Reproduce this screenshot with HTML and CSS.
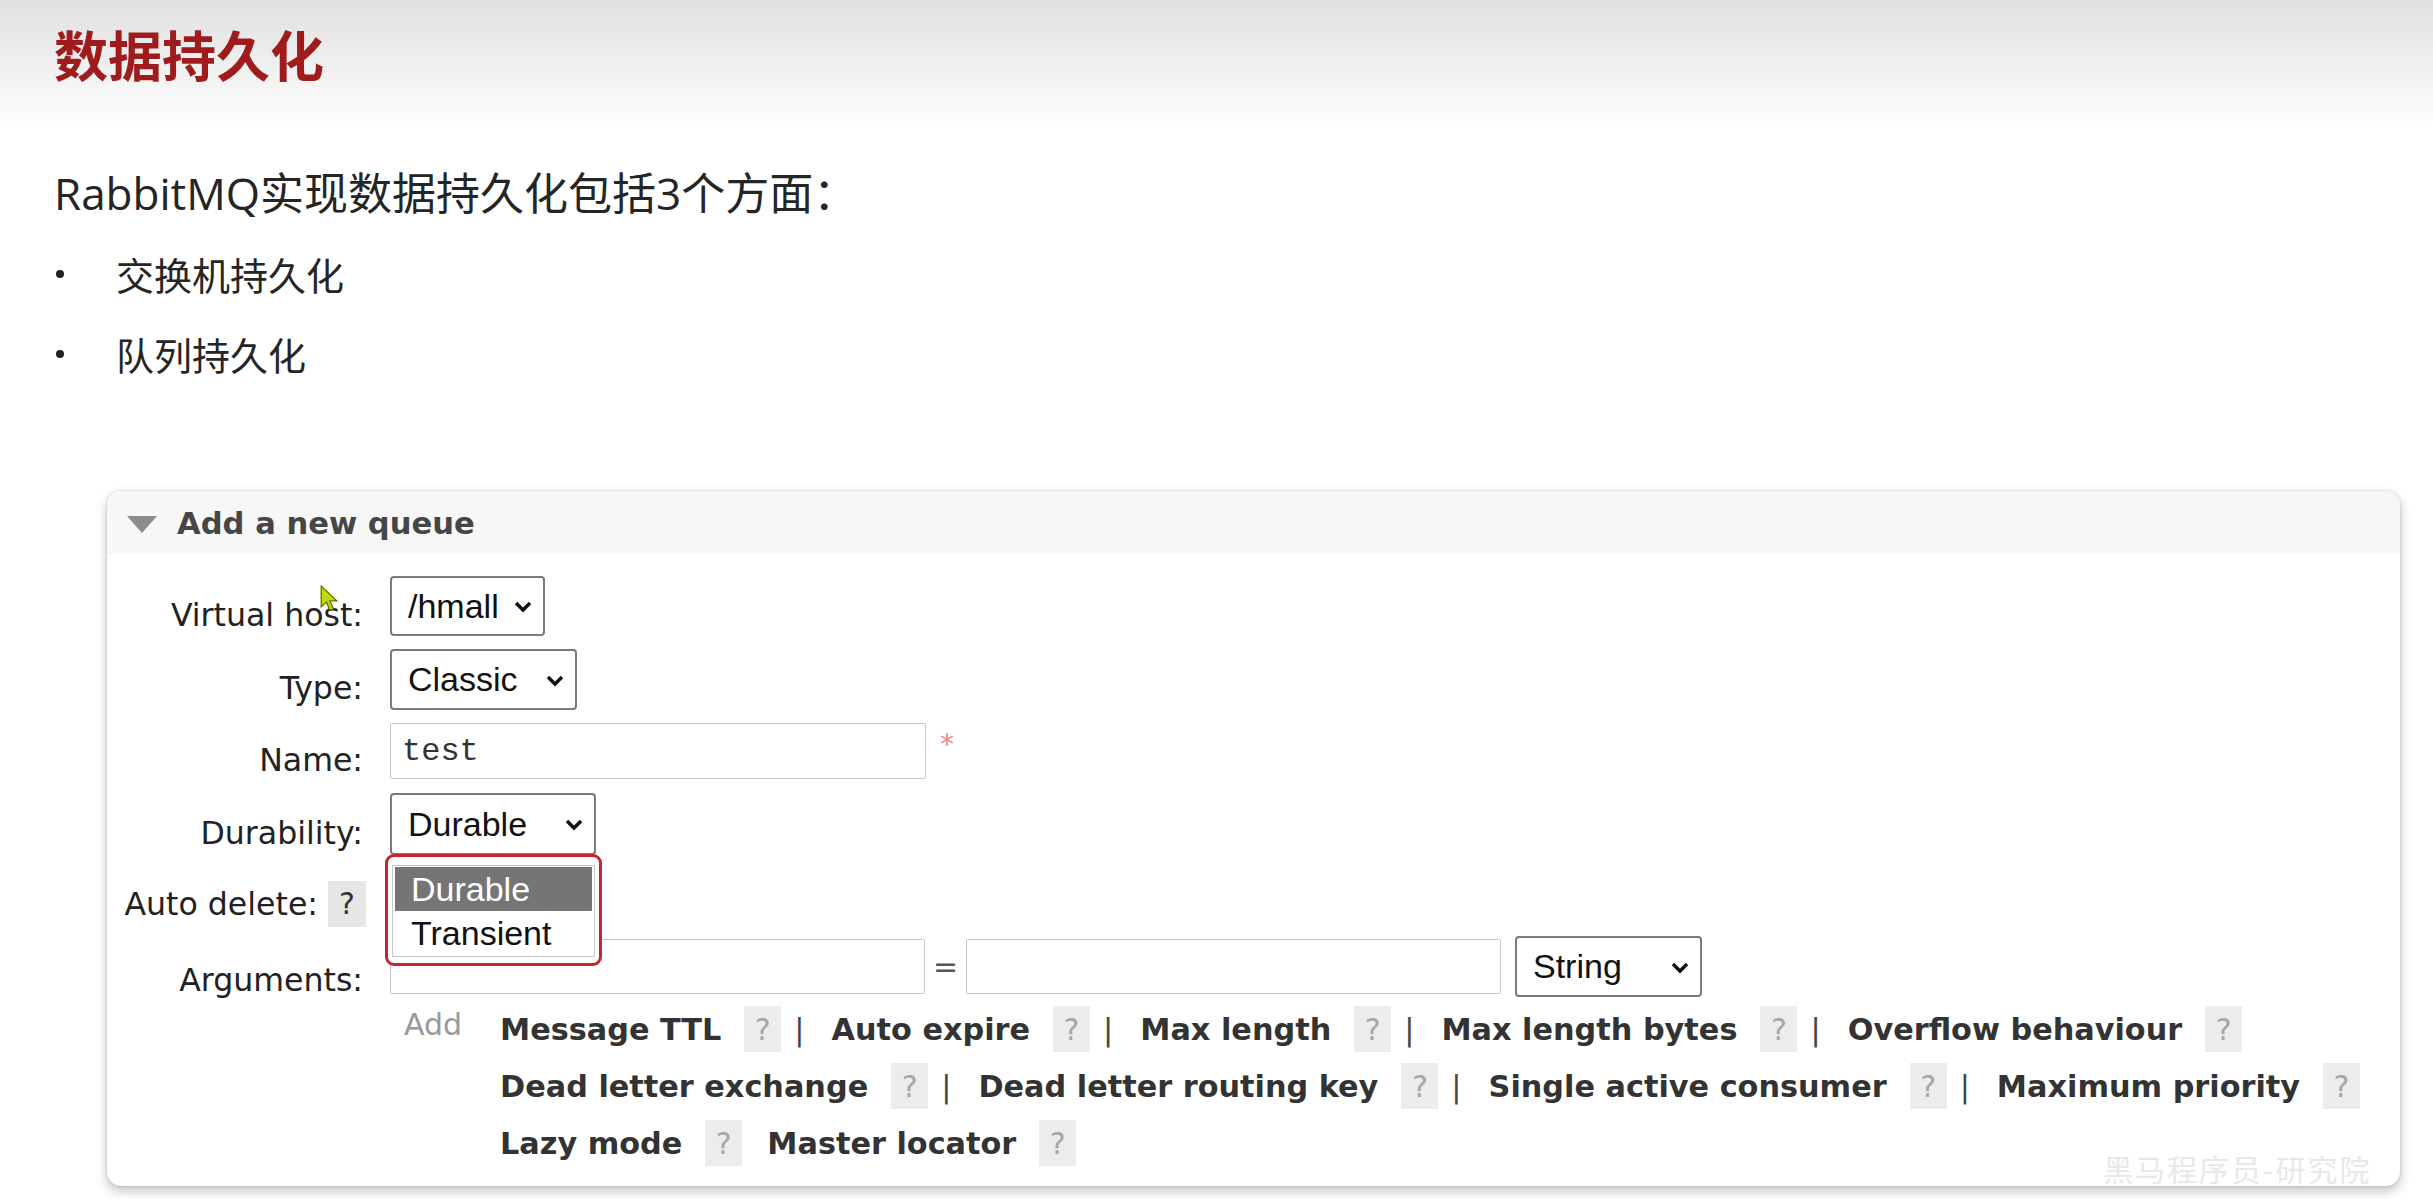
FILE: index.html
```html
<!DOCTYPE html>
<html lang="zh">
<head>
<meta charset="utf-8">
<title>数据持久化</title>
<link rel="stylesheet" href="styles.css">
</head>
<body>
<header class="top"><h1>数据持久化</h1></header>
<main class="content">
  <p class="lead">RabbitMQ实现数据持久化包括3个方面：</p>
  <ul class="bullets">
    <li>交换机持久化</li>
    <li>队列持久化</li>
  </ul>

  <section class="card">
    <div class="card-head">
      <svg class="tri" viewBox="0 0 30 17"><polygon points="0,0 30,0 15,17" fill="#8c8c8c"/></svg>
      <h2>Add a new queue</h2>
    </div>
    <div class="card-body">
      <div class="row r-vh">
        <div class="lbl">Virtual host:</div>
        <div class="sel w-vh"><span>/hmall</span><svg viewBox="0 0 18 12"><polyline points="2,2 9,9 16,2" fill="none" stroke="#111" stroke-width="3.4"/></svg></div>
      </div>
      <div class="row r-type">
        <div class="lbl">Type:</div>
        <div class="sel w-type"><span>Classic</span><svg viewBox="0 0 18 12"><polyline points="2,2 9,9 16,2" fill="none" stroke="#111" stroke-width="3.4"/></svg></div>
      </div>
      <div class="row r-name">
        <div class="lbl">Name:</div>
        <div class="inp w-name"><span class="mono">test</span></div>
        <span class="req">*</span>
      </div>
      <div class="row r-dur">
        <div class="lbl">Durability:</div>
        <div class="sel w-dur"><span>Durable</span><svg viewBox="0 0 18 12"><polyline points="2,2 9,9 16,2" fill="none" stroke="#111" stroke-width="3.4"/></svg>
          <div class="popup">
            <div class="list">
              <div class="opt on">Durable</div>
              <div class="opt">Transient</div>
            </div>
          </div>
        </div>
      </div>
      <div class="row r-auto">
        <div class="lbl lbl-auto">Auto delete: <span class="qd">?</span></div>
      </div>
      <div class="row r-args">
        <div class="lbl lbl-args">Arguments:</div>
        <div class="inp w-key"></div>
        <span class="eq">=</span>
        <div class="inp w-val"></div>
        <div class="sel w-str"><span>String</span><svg viewBox="0 0 18 12"><polyline points="2,2 9,9 16,2" fill="none" stroke="#111" stroke-width="3.4"/></svg></div>
      </div>
      <div class="row r-add">
        <div class="lbl-space"></div>
        <span class="addlbl">Add</span>
        <div class="links">
          <div class="ln">
            <span>Message TTL</span><span class="q">?</span><span class="sep">|</span>
            <span>Auto expire</span><span class="q">?</span><span class="sep">|</span>
            <span>Max length</span><span class="q">?</span><span class="sep">|</span>
            <span>Max length bytes</span><span class="q">?</span><span class="sep">|</span>
            <span>Overflow behaviour</span><span class="q">?</span>
          </div>
          <div class="ln">
            <span>Dead letter exchange</span><span class="q">?</span><span class="sep">|</span>
            <span>Dead letter routing key</span><span class="q">?</span><span class="sep">|</span>
            <span>Single active consumer</span><span class="q">?</span><span class="sep">|</span>
            <span>Maximum priority</span><span class="q">?</span>
          </div>
          <div class="ln">
            <span>Lazy mode</span><span class="q">?</span>
            <span class="next">Master locator</span><span class="q">?</span>
          </div>
        </div>
      </div>
    </div>
    <svg class="cursor" viewBox="0 0 18 26"><polygon points="1,1 1,21 6,16.5 9.5,24.5 12.8,23 9.3,15.2 16,15.2" fill="#bfdc00" stroke="#5f7000" stroke-width="1.2"/></svg>
    <div class="wm">黑马程序员-研究院</div>
  </section>
</main>
</body>
</html>
```
FILE: styles.css
```css
* { box-sizing: border-box; margin: 0; padding: 0; }
html, body { background: #fff; }
body {
  width: 2433px;
  height: 1199px;
  overflow: hidden;
  font-family: "Noto Sans CJK SC", sans-serif;
  color: #222;
}

/* slide header */
.top {
  height: 130px;
  padding: 27px 0 0 54px;
  background: linear-gradient(#e0e0e0, #ffffff);
}
.top h1 {
  font-family: "Noto Sans CJK SC", sans-serif;
  font-size: 54px;
  line-height: 54px;
  font-weight: 700;
  color: #a01c1c;
}

.content { padding-left: 54px; }

.lead {
  margin-top: 37px;
  font-family: "Open Sans", "Noto Sans CJK SC", sans-serif;
  font-size: 44px;
  line-height: 52px;
  color: #252525;
}
.bullets { list-style: none; margin-top: 14px; }
.bullets li {
  display: flex;
  align-items: center;
  height: 80px;
  font-size: 38px;
  color: #252525;
}
.bullets li::before {
  content: "";
  width: 8px;
  height: 8px;
  border-radius: 50%;
  background: #222;
  margin: 2px 52px 0 2px;
  flex: none;
}

/* management UI card */
.card {
  position: relative;
  margin: 98px 0 0 53px;
  width: 2293px;
  height: 695px;
  border-radius: 14px;
  background: #fff;
  box-shadow: 0 5px 12px rgba(0,0,0,0.24), 0 0 3px rgba(0,0,0,0.18);
  font-family: "DejaVu Sans", Verdana, sans-serif;
  color: #222;
}
.card-head {
  height: 63px;
  background: #f7f7f7;
  border-radius: 14px 14px 0 0;
  display: flex;
  align-items: center;
  padding-left: 20px;
}
.tri { width: 30px; height: 17px; margin: 4px 20px 0 0; }
.card-head h2 {
  font-size: 30.6px;
  font-weight: 700;
  color: #464646;
  line-height: 36px;
  margin-top: 3px;
}
.card-body { padding-top: 22px; }

.row { display: flex; align-items: center; }
.r-vh { height: 60px; margin-bottom: 13px; }
.r-type { height: 61px; margin-bottom: 13px; }
.r-name { height: 56px; margin-bottom: 14px; }
.r-dur { height: 62px; margin-bottom: 26px; }
.r-auto { height: 46px; margin-bottom: 12px; }
.r-args { height: 55px; margin-bottom: 12px; }
.r-add { align-items: flex-start; }

.lbl {
  flex: none;
  width: 256px;
  margin-right: 27px;
  text-align: right;
  font-size: 31.6px;
  line-height: 36px;
  padding-top: 17px;
  color: #222;
}
.lbl-args { padding-top: 26px; }
.lbl-auto {
  padding-top: 0;
  width: 259px;
  margin-right: 24px;
  display: flex;
  align-items: center;
  justify-content: flex-end;
}
.qd {
  display: inline-flex;
  align-items: center;
  justify-content: center;
  width: 38px;
  height: 46px;
  margin-left: 10px;
  background: #e6e6e6;
  color: #333;
  font-size: 30px;
}
.lbl-space { flex: none; width: 283px; }

/* select boxes */
.sel {
  position: relative;
  flex: none;
  display: flex;
  align-items: center;
  justify-content: space-between;
  border: 2px solid #7a7a7a;
  border-radius: 4px;
  padding: 0 11px 0 16px;
  background: #fff;
  font-family: "Liberation Sans", Arial, sans-serif;
  font-size: 34px;
  color: #111;
}
.sel svg { width: 18px; height: 12px; flex: none; margin-top: 2px; }
.w-vh { width: 155px; height: 60px; }
.w-type { width: 187px; height: 61px; }
.w-dur { width: 206px; height: 62px; }
.w-str { width: 187px; height: 61px; margin-left: 14px; }

/* text inputs */
.inp {
  flex: none;
  height: 56px;
  border: 1px solid #c6c6c6;
  border-radius: 2px;
  background: #fff;
  display: flex;
  align-items: center;
  padding-left: 11px;
}
.w-name { width: 536px; }
.w-key { width: 535px; height: 55px; }
.w-val { width: 535px; height: 55px; }
.mono {
  font-family: "Liberation Mono", "Courier New", monospace;
  font-size: 32px;
  color: #333;
}
.req {
  margin: -14px 0 0 14px;
  font-size: 28px;
  color: #e98a8a;
}
.eq {
  width: 41px;
  text-align: center;
  font-size: 30px;
  color: #555;
}

/* dropdown list popup */
.popup {
  position: absolute;
  left: -7px;
  top: 59px;
  width: 217px;
  height: 112px;
  border: 3px solid #c3262c;
  border-radius: 9px;
  padding: 8px 4px 0 4px;
  background: #fff;
  z-index: 5;
}
.list {
  border: 1px solid #c8c8c8;
  padding: 1px 2px;
  background: #fff;
}
.opt {
  height: 44px;
  line-height: 44px;
  padding-left: 16px;
  font-family: "Liberation Sans", Arial, sans-serif;
  font-size: 34px;
  color: #111;
}
.opt.on { background: #757575; color: #fff; }

/* argument shortcut links */
.addlbl {
  flex: none;
  width: 96px;
  margin-left: 14px;
  margin-top: 1px;
  font-size: 30px;
  line-height: 36px;
  color: #999;
}
.links { display: flex; flex-direction: column; gap: 11px; }
.ln {
  display: flex;
  align-items: center;
  height: 46px;
  font-size: 30.3px;
  font-weight: 700;
  color: #333;
  white-space: nowrap;
}
.q {
  display: inline-flex;
  align-items: center;
  justify-content: center;
  width: 37px;
  height: 46px;
  margin-left: 23px;
  background: #ececec;
  color: #a6a6a6;
  font-weight: 400;
  font-size: 30px;
}
.sep {
  margin: 0 27px 0 13px;
  font-weight: 400;
  color: #444;
}
.next { margin-left: 25px; }

/* overlays */
.cursor {
  position: absolute;
  left: 213px;
  top: 94px;
  width: 19px;
  height: 27px;
}
.wm {
  position: absolute;
  left: 1996px;
  top: 660px;
  font-family: "Noto Sans CJK SC", sans-serif;
  font-size: 30px;
  line-height: 34px;
  letter-spacing: 2px;
  color: #e8e8e8;
  white-space: nowrap;
}
```
